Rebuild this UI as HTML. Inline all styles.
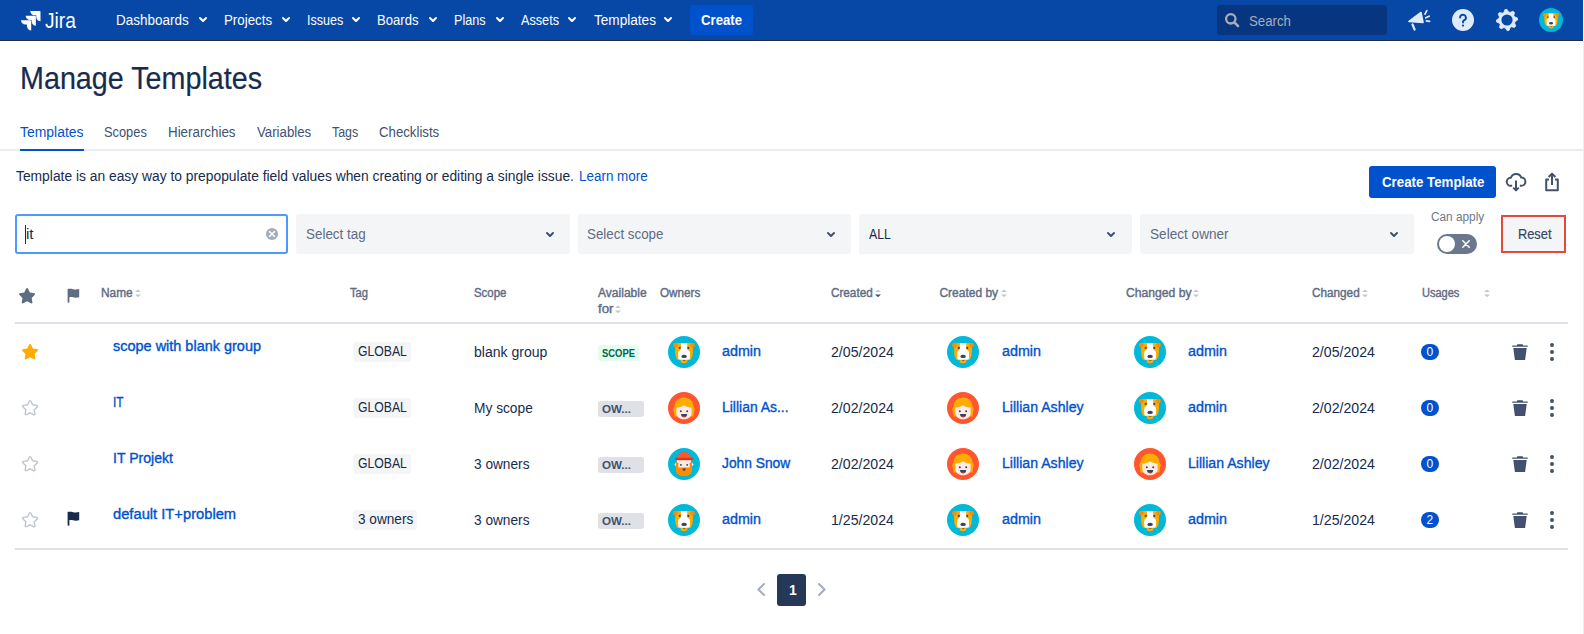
<!DOCTYPE html>
<html><head><meta charset="utf-8"><title>Manage Templates</title>
<style>
html,body{margin:0;padding:0;}
body{width:1584px;height:634px;overflow:hidden;position:relative;background:#fff;font-family:"Liberation Sans",sans-serif;}
.t{position:absolute;white-space:nowrap;}
.b{position:absolute;}
svg.b{overflow:visible;}
</style></head><body>
<div class="b" style="left:0px;top:0px;width:1583px;height:40px;background:#0747A6;"></div>
<div class="b" style="left:0px;top:40px;width:1583px;height:1px;background:#1A2B4C;"></div>
<svg class="b" style="left:20.8px;top:10.6px;" width="19.5" height="19.5" viewBox="1.33 2 27.41 27.41"><defs><linearGradient id="lg1" x1="1" y1="0" x2="0" y2="1"><stop offset="0.45" stop-color="#fff"/><stop offset="1" stop-color="#fff" stop-opacity="0.55"/></linearGradient></defs><path fill="#fff" d="M27.6 2H14.4a5.95 5.95 0 0 0 5.95 5.95h2.44v2.36a5.95 5.95 0 0 0 5.95 5.95V3.14A1.14 1.14 0 0 0 27.6 2z"/><path fill="url(#lg1)" d="M21.07 8.58H7.87a5.95 5.95 0 0 0 5.95 5.95h2.44v2.36a5.95 5.95 0 0 0 5.95 5.95V9.72a1.14 1.14 0 0 0-1.14-1.14z"/><path fill="url(#lg1)" d="M14.53 15.15H1.33a5.95 5.95 0 0 0 5.95 5.95h2.44v2.36a5.95 5.95 0 0 0 5.95 5.95V16.29a1.14 1.14 0 0 0-1.14-1.14z"/></svg>
<div class="t" style="left:44.80px;top:10.38px;font-size:22px;line-height:22px;color:#FFFFFF;transform:scaleX(0.8725);transform-origin:0 0;font-weight:400;">Jira</div>
<div class="t" style="left:116.40px;top:13.15px;font-size:14px;line-height:14px;color:#FFFFFF;transform:scaleX(0.9621);transform-origin:0 0;">Dashboards</div>
<svg class="b" style="left:191px;top:7px;" width="24" height="24" viewBox="0 0 24 24"><path fill="#FFFFFF" d="M8.292 10.293a1.009 1.009 0 0 0 0 1.419l2.939 2.965c.218.215.5.322.779.322s.556-.107.769-.322l2.93-2.955a1.01 1.01 0 0 0 0-1.419.987.987 0 0 0-1.406 0l-2.298 2.317-2.307-2.327a.99.99 0 0 0-1.406 0z"/></svg>
<div class="t" style="left:224.20px;top:13.15px;font-size:14px;line-height:14px;color:#FFFFFF;transform:scaleX(0.9497);transform-origin:0 0;">Projects</div>
<svg class="b" style="left:274px;top:7px;" width="24" height="24" viewBox="0 0 24 24"><path fill="#FFFFFF" d="M8.292 10.293a1.009 1.009 0 0 0 0 1.419l2.939 2.965c.218.215.5.322.779.322s.556-.107.769-.322l2.93-2.955a1.01 1.01 0 0 0 0-1.419.987.987 0 0 0-1.406 0l-2.298 2.317-2.307-2.327a.99.99 0 0 0-1.406 0z"/></svg>
<div class="t" style="left:307.00px;top:13.15px;font-size:14px;line-height:14px;color:#FFFFFF;transform:scaleX(0.8947);transform-origin:0 0;">Issues</div>
<svg class="b" style="left:344.4px;top:7px;" width="24" height="24" viewBox="0 0 24 24"><path fill="#FFFFFF" d="M8.292 10.293a1.009 1.009 0 0 0 0 1.419l2.939 2.965c.218.215.5.322.779.322s.556-.107.769-.322l2.93-2.955a1.01 1.01 0 0 0 0-1.419.987.987 0 0 0-1.406 0l-2.298 2.317-2.307-2.327a.99.99 0 0 0-1.406 0z"/></svg>
<div class="t" style="left:377.20px;top:13.15px;font-size:14px;line-height:14px;color:#FFFFFF;transform:scaleX(0.9351);transform-origin:0 0;">Boards</div>
<svg class="b" style="left:421px;top:7px;" width="24" height="24" viewBox="0 0 24 24"><path fill="#FFFFFF" d="M8.292 10.293a1.009 1.009 0 0 0 0 1.419l2.939 2.965c.218.215.5.322.779.322s.556-.107.769-.322l2.93-2.955a1.01 1.01 0 0 0 0-1.419.987.987 0 0 0-1.406 0l-2.298 2.317-2.307-2.327a.99.99 0 0 0-1.406 0z"/></svg>
<div class="t" style="left:454.20px;top:13.15px;font-size:14px;line-height:14px;color:#FFFFFF;transform:scaleX(0.9029);transform-origin:0 0;">Plans</div>
<svg class="b" style="left:487.5px;top:7px;" width="24" height="24" viewBox="0 0 24 24"><path fill="#FFFFFF" d="M8.292 10.293a1.009 1.009 0 0 0 0 1.419l2.939 2.965c.218.215.5.322.779.322s.556-.107.769-.322l2.93-2.955a1.01 1.01 0 0 0 0-1.419.987.987 0 0 0-1.406 0l-2.298 2.317-2.307-2.327a.99.99 0 0 0-1.406 0z"/></svg>
<div class="t" style="left:521.00px;top:13.15px;font-size:14px;line-height:14px;color:#FFFFFF;transform:scaleX(0.9048);transform-origin:0 0;">Assets</div>
<svg class="b" style="left:560px;top:7px;" width="24" height="24" viewBox="0 0 24 24"><path fill="#FFFFFF" d="M8.292 10.293a1.009 1.009 0 0 0 0 1.419l2.939 2.965c.218.215.5.322.779.322s.556-.107.769-.322l2.93-2.955a1.01 1.01 0 0 0 0-1.419.987.987 0 0 0-1.406 0l-2.298 2.317-2.307-2.327a.99.99 0 0 0-1.406 0z"/></svg>
<div class="t" style="left:593.60px;top:13.15px;font-size:14px;line-height:14px;color:#FFFFFF;transform:scaleX(0.9712);transform-origin:0 0;">Templates</div>
<svg class="b" style="left:656px;top:7px;" width="24" height="24" viewBox="0 0 24 24"><path fill="#FFFFFF" d="M8.292 10.293a1.009 1.009 0 0 0 0 1.419l2.939 2.965c.218.215.5.322.779.322s.556-.107.769-.322l2.93-2.955a1.01 1.01 0 0 0 0-1.419.987.987 0 0 0-1.406 0l-2.298 2.317-2.307-2.327a.99.99 0 0 0-1.406 0z"/></svg>
<div class="b" style="left:690px;top:5px;width:63px;height:30px;background:#0052CC;border-radius:3px;"></div>
<div class="t" style="left:701.00px;top:13.15px;font-size:14px;line-height:14px;color:#FFFFFF;font-weight:700;transform:scaleX(0.9402);transform-origin:0 0;">Create</div>
<div class="b" style="left:1217px;top:5px;width:170px;height:30px;background:#08357F;border-radius:3px;"></div>
<svg class="b" style="left:1220px;top:8px;" width="24" height="24" viewBox="0 0 24 24"><circle cx="10.8" cy="10.8" r="4.7" fill="none" stroke="#A5ADBA" stroke-width="2.3"/><path d="M14.3 14.3L18 18" stroke="#A5ADBA" stroke-width="2.5" stroke-linecap="round"/></svg>
<div class="t" style="left:1249.00px;top:13.95px;font-size:14px;line-height:14px;color:#A5ADBA;transform:scaleX(0.9464);transform-origin:0 0;">Search</div>
<svg class="b" style="left:1406px;top:8px;" width="26" height="24" viewBox="0 0 26 24"><path fill="#DEEBFF" d="M3 13.5 L15 4.5 L17 14.5 Z" stroke="#DEEBFF" stroke-width="1.6" stroke-linejoin="round"/><path d="M6.5 16.5 L8.6 21.5" stroke="#DEEBFF" stroke-width="2.2" stroke-linecap="round"/><path d="M19 6.2 L20.8 2.6 M19.8 9.8 L23.2 8.2 M20.4 12.8 L23.6 13.4" stroke="#DEEBFF" stroke-width="1.7" stroke-linecap="round"/></svg>
<svg class="b" style="left:1452px;top:9px;" width="22" height="22" viewBox="0 0 22 22"><circle cx="11" cy="11" r="11" fill="#DEEBFF"/><path d="M8.1 8.6a2.9 2.9 0 1 1 4.2 2.6c-.8.4-1.3.9-1.3 1.8v.6" fill="none" stroke="#0747A6" stroke-width="1.9" stroke-linecap="round"/><circle cx="11" cy="16.6" r="1.1" fill="#0747A6"/></svg>
<svg class="b" style="left:1496px;top:9px;" width="22" height="22" viewBox="0 0 22 22"><polygon fill="#DEEBFF" stroke="#DEEBFF" stroke-width="0.8" stroke-linejoin="round" points="21.40,8.93 21.60,11.00 19.04,12.60 18.58,14.14 19.81,16.89 18.50,18.50 15.56,17.82 14.14,18.58 13.07,21.40 11.00,21.60 9.40,19.04 7.86,18.58 5.11,19.81 3.50,18.50 4.18,15.56 3.42,14.14 0.60,13.07 0.40,11.00 2.96,9.40 3.42,7.86 2.19,5.11 3.50,3.50 6.44,4.18 7.86,3.42 8.93,0.60 11.00,0.40 12.60,2.96 14.14,3.42 16.89,2.19 18.50,3.50 17.82,6.44 18.58,7.86"/><circle cx="11" cy="11" r="5.6" fill="#0747A6"/></svg>
<svg class="b" style="left:1539px;top:8px" width="24" height="24" viewBox="0 0 32 32"><circle cx="16" cy="16" r="16" fill="#00B8D9"/><path fill="#FFAB00" d="M7.1 7.1H24.9V16Q24.9 20.5 22.9 23.7H9.1Q7.1 20.5 7.1 16Z"/><circle cx="7.5" cy="9.1" r="2.4" fill="#FF8B00"/><circle cx="24.5" cy="9.1" r="2.4" fill="#FF8B00"/><path fill="#FFAB00" d="M12.6 23H19.4V25Q19.4 27.2 16 27.2Q12.6 27.2 12.6 25Z"/><path fill="#FFFFFF" d="M13 7.3H19.2V13.2L22 15.8V22.2Q22 23.8 19.4 23.8H12.6Q10.2 23.8 10.2 22.2V15.8L13 13.2Z"/><circle cx="11.7" cy="11.9" r="1.05" fill="#344563"/><circle cx="20.3" cy="11.9" r="1.05" fill="#344563"/><ellipse cx="16.1" cy="20.4" rx="2.8" ry="1.6" fill="#344563"/><path fill="#344563" d="M14.6 24H17.8Q16.2 25.3 14.6 24Z"/></svg>
<div class="t" style="left:20.40px;top:63.18px;font-size:30.5px;line-height:30.5px;color:#172B4D;transform:scaleX(0.9412);transform-origin:0 0;-webkit-text-stroke:0.2px #172B4D;">Manage Templates</div>
<div class="b" style="left:0px;top:149px;width:1583px;height:2px;background:#EBECF0;"></div>
<div class="b" style="left:20px;top:149px;width:64px;height:2px;background:#0052CC;"></div>
<div class="t" style="left:20.30px;top:125.15px;font-size:14px;line-height:14px;color:#0052CC;transform:scaleX(0.9962);transform-origin:0 0;">Templates</div>
<div class="t" style="left:104.20px;top:125.15px;font-size:14px;line-height:14px;color:#42526E;transform:scaleX(0.9167);transform-origin:0 0;">Scopes</div>
<div class="t" style="left:168.30px;top:125.15px;font-size:14px;line-height:14px;color:#42526E;transform:scaleX(0.9538);transform-origin:0 0;">Hierarchies</div>
<div class="t" style="left:256.70px;top:125.15px;font-size:14px;line-height:14px;color:#42526E;transform:scaleX(0.9454);transform-origin:0 0;">Variables</div>
<div class="t" style="left:332.00px;top:125.15px;font-size:14px;line-height:14px;color:#42526E;transform:scaleX(0.8869);transform-origin:0 0;">Tags</div>
<div class="t" style="left:378.60px;top:125.15px;font-size:14px;line-height:14px;color:#42526E;transform:scaleX(0.9440);transform-origin:0 0;">Checklists</div>
<div class="t" style="left:16.00px;top:168.95px;font-size:14px;line-height:14px;color:#172B4D;transform:scaleX(0.9875);transform-origin:0 0;">Template is an easy way to prepopulate field values when creating or editing a single issue.</div>
<div class="t" style="left:579.30px;top:168.95px;font-size:14px;line-height:14px;color:#0052CC;transform:scaleX(0.9594);transform-origin:0 0;">Learn more</div>
<div class="b" style="left:1369px;top:166px;width:127px;height:32px;background:#0052CC;border-radius:3px;"></div>
<div class="t" style="left:1381.50px;top:174.85px;font-size:14px;line-height:14px;color:#FFFFFF;font-weight:700;transform:scaleX(0.9493);transform-origin:0 0;">Create Template</div>
<svg class="b" style="left:1504px;top:170px;" width="24" height="24" viewBox="0 0 24 24"><path d="M8.2 15.8H6.6A4 4 0 0 1 6.9 7.8A5.5 5.5 0 0 1 17.3 7.6A4.1 4.1 0 0 1 17.3 15.8H15.8" fill="none" stroke="#42526E" stroke-width="2" stroke-linejoin="round"/><path d="M12 10.5V20.2" stroke="#42526E" stroke-width="2"/><path d="M9.2 17.6L12 20.4 14.8 17.6" fill="none" stroke="#42526E" stroke-width="2" stroke-linejoin="round"/></svg>
<svg class="b" style="left:1540px;top:170px;" width="24" height="24" viewBox="0 0 24 24"><path d="M9 9.5H6.2V20.2H17.8V9.5H15" fill="none" stroke="#42526E" stroke-width="2" stroke-linejoin="round"/><path d="M12 4V15" stroke="#42526E" stroke-width="2"/><path d="M8.6 7L12 3.6 15.4 7" fill="none" stroke="#42526E" stroke-width="2" stroke-linejoin="round"/></svg>
<div class="b" style="left:15px;top:214px;width:273px;height:40px;box-sizing:border-box;border:2px solid #4C9AFF;border-radius:3px;background:#fff"></div>
<div class="b" style="left:25px;top:225px;width:1px;height:19px;background:#172B4D;"></div>
<div class="t" style="left:26.00px;top:226.95px;font-size:14px;line-height:14px;color:#172B4D;transform:scaleX(1.0714);transform-origin:0 0;">it</div>
<svg class="b" style="left:266px;top:228px;" width="12" height="12" viewBox="0 0 12 12"><circle cx="6" cy="6" r="6" fill="#A5ADBA"/><path d="M3.7 3.7L8.3 8.3M8.3 3.7L3.7 8.3" stroke="#fff" stroke-width="1.6" stroke-linecap="round"/></svg>
<div class="b" style="left:296px;top:214px;width:274px;height:40px;background:#F4F5F7;border-radius:3px;"></div>
<div class="t" style="left:305.50px;top:226.95px;font-size:14px;line-height:14px;color:#5E6C84;transform:scaleX(0.9577);transform-origin:0 0;">Select tag</div>
<svg class="b" style="left:538px;top:222px;" width="24" height="24" viewBox="0 0 24 24"><path fill="#42526E" d="M8.292 10.293a1.009 1.009 0 0 0 0 1.419l2.939 2.965c.218.215.5.322.779.322s.556-.107.769-.322l2.93-2.955a1.01 1.01 0 0 0 0-1.419.987.987 0 0 0-1.406 0l-2.298 2.317-2.307-2.327a.99.99 0 0 0-1.406 0z"/></svg>
<div class="b" style="left:578px;top:214px;width:273px;height:40px;background:#F4F5F7;border-radius:3px;"></div>
<div class="t" style="left:586.90px;top:226.95px;font-size:14px;line-height:14px;color:#5E6C84;transform:scaleX(0.9532);transform-origin:0 0;">Select scope</div>
<svg class="b" style="left:818.8px;top:222px;" width="24" height="24" viewBox="0 0 24 24"><path fill="#42526E" d="M8.292 10.293a1.009 1.009 0 0 0 0 1.419l2.939 2.965c.218.215.5.322.779.322s.556-.107.769-.322l2.93-2.955a1.01 1.01 0 0 0 0-1.419.987.987 0 0 0-1.406 0l-2.298 2.317-2.307-2.327a.99.99 0 0 0-1.406 0z"/></svg>
<div class="b" style="left:859px;top:214px;width:273px;height:40px;background:#F4F5F7;border-radius:3px;"></div>
<div class="t" style="left:869.00px;top:226.95px;font-size:14px;line-height:14px;color:#172B4D;transform:scaleX(0.8788);transform-origin:0 0;">ALL</div>
<svg class="b" style="left:1099px;top:222px;" width="24" height="24" viewBox="0 0 24 24"><path fill="#42526E" d="M8.292 10.293a1.009 1.009 0 0 0 0 1.419l2.939 2.965c.218.215.5.322.779.322s.556-.107.769-.322l2.93-2.955a1.01 1.01 0 0 0 0-1.419.987.987 0 0 0-1.406 0l-2.298 2.317-2.307-2.327a.99.99 0 0 0-1.406 0z"/></svg>
<div class="b" style="left:1140px;top:214px;width:274px;height:40px;background:#F4F5F7;border-radius:3px;"></div>
<div class="t" style="left:1149.50px;top:226.95px;font-size:14px;line-height:14px;color:#5E6C84;transform:scaleX(0.9713);transform-origin:0 0;">Select owner</div>
<svg class="b" style="left:1382px;top:222px;" width="24" height="24" viewBox="0 0 24 24"><path fill="#42526E" d="M8.292 10.293a1.009 1.009 0 0 0 0 1.419l2.939 2.965c.218.215.5.322.779.322s.556-.107.769-.322l2.93-2.955a1.01 1.01 0 0 0 0-1.419.987.987 0 0 0-1.406 0l-2.298 2.317-2.307-2.327a.99.99 0 0 0-1.406 0z"/></svg>
<div class="t" style="left:1430.50px;top:211.34px;font-size:12px;line-height:12px;color:#6B778C;transform:scaleX(0.9841);transform-origin:0 0;">Can apply</div>
<div class="b" style="left:1437px;top:234px;width:40px;height:20px;background:#6B778C;border-radius:10px;"></div>
<div class="b" style="left:1439px;top:236px;width:16px;height:16px;border-radius:8px;background:#fff"></div>
<svg class="b" style="left:1461px;top:239px;" width="10" height="10" viewBox="0 0 10 10"><path d="M1.8 1.8L8.2 8.2M8.2 1.8L1.8 8.2" stroke="#fff" stroke-width="1.5" stroke-linecap="round"/></svg>
<div class="b" style="left:1501px;top:215px;width:65px;height:38px;box-sizing:border-box;border:2.5px solid #E5493A;background:#F4F5F7"></div>
<div class="t" style="left:1517.60px;top:226.65px;font-size:14px;line-height:14px;color:#344563;transform:scaleX(0.9141);transform-origin:0 0;-webkit-text-stroke:0.2px #344563;">Reset</div>
<svg class="b" style="left:15px;top:284px;" width="24" height="24" viewBox="0 0 24 24"><path fill="#5E6C84" d="M12.072 17.284l-3.905 2.053a1 1 0 0 1-1.451-1.054l.745-4.349-3.159-3.08a1 1 0 0 1 .554-1.705l4.366-.635 1.953-3.956a1 1 0 0 1 1.794 0l1.952 3.956 4.366.635a1 1 0 0 1 .555 1.705l-3.16 3.08.746 4.349a1 1 0 0 1-1.45 1.054l-3.906-2.053z"/></svg>
<svg class="b" style="left:67px;top:288px;" width="13" height="15" viewBox="0 0 13 15"><path fill="#5E6C84" d="M0.6 0.8H2.4V14.6H0.6Z"/><path fill="#5E6C84" d="M1 1.2C4 -0.2 6.6 1.6 8.8 1.4C10 1.3 11 1 12.2 0.9V9.2C11 9.4 10 9.6 8.8 9.7C6.6 9.9 4 8.2 1 9.6Z"/></svg>
<div class="t" style="left:101.40px;top:286.54px;font-size:12px;line-height:12px;color:#5E6C84;transform:scaleX(0.9863);transform-origin:0 0;-webkit-text-stroke:0.4px #5E6C84;">Name</div>
<svg class="b" style="left:135px;top:288.5px;" width="6" height="9" viewBox="0 0 6 9"><path fill="#C1C7D0" d="M0 3.0L3 0.4 6 3.0Z"/><path fill="#C1C7D0" d="M0 5.6L3 8.3 6 5.6Z"/></svg>
<div class="t" style="left:349.60px;top:286.54px;font-size:12px;line-height:12px;color:#5E6C84;transform:scaleX(0.9317);transform-origin:0 0;-webkit-text-stroke:0.4px #5E6C84;">Tag</div>
<div class="t" style="left:473.60px;top:286.54px;font-size:12px;line-height:12px;color:#5E6C84;transform:scaleX(0.9524);transform-origin:0 0;-webkit-text-stroke:0.4px #5E6C84;">Scope</div>
<div class="t" style="left:597.90px;top:286.54px;font-size:12px;line-height:12px;color:#5E6C84;transform:scaleX(1.0045);transform-origin:0 0;-webkit-text-stroke:0.4px #5E6C84;">Available</div>
<div class="t" style="left:660.30px;top:286.54px;font-size:12px;line-height:12px;color:#5E6C84;transform:scaleX(0.9748);transform-origin:0 0;-webkit-text-stroke:0.4px #5E6C84;">Owners</div>
<div class="t" style="left:830.60px;top:286.54px;font-size:12px;line-height:12px;color:#5E6C84;transform:scaleX(0.9761);transform-origin:0 0;-webkit-text-stroke:0.4px #5E6C84;">Created</div>
<svg class="b" style="left:875px;top:288.5px;" width="6" height="9" viewBox="0 0 6 9"><path fill="#C1C7D0" d="M0 3.0L3 0.4 6 3.0Z"/><path fill="#42526E" d="M0 5.6L3 8.3 6 5.6Z"/></svg>
<div class="t" style="left:939.40px;top:286.54px;font-size:12px;line-height:12px;color:#5E6C84;-webkit-text-stroke:0.4px #5E6C84;">Created by</div>
<svg class="b" style="left:1000.6px;top:288.5px;" width="6" height="9" viewBox="0 0 6 9"><path fill="#C1C7D0" d="M0 3.0L3 0.4 6 3.0Z"/><path fill="#C1C7D0" d="M0 5.6L3 8.3 6 5.6Z"/></svg>
<div class="t" style="left:1125.60px;top:286.54px;font-size:12px;line-height:12px;color:#5E6C84;transform:scaleX(1.0133);transform-origin:0 0;-webkit-text-stroke:0.4px #5E6C84;">Changed by</div>
<svg class="b" style="left:1193px;top:288.5px;" width="6" height="9" viewBox="0 0 6 9"><path fill="#C1C7D0" d="M0 3.0L3 0.4 6 3.0Z"/><path fill="#C1C7D0" d="M0 5.6L3 8.3 6 5.6Z"/></svg>
<div class="t" style="left:1312.30px;top:286.54px;font-size:12px;line-height:12px;color:#5E6C84;transform:scaleX(0.9791);transform-origin:0 0;-webkit-text-stroke:0.4px #5E6C84;">Changed</div>
<svg class="b" style="left:1362.3px;top:288.5px;" width="6" height="9" viewBox="0 0 6 9"><path fill="#C1C7D0" d="M0 3.0L3 0.4 6 3.0Z"/><path fill="#C1C7D0" d="M0 5.6L3 8.3 6 5.6Z"/></svg>
<div class="t" style="left:1421.50px;top:286.54px;font-size:12px;line-height:12px;color:#5E6C84;transform:scaleX(0.9169);transform-origin:0 0;-webkit-text-stroke:0.4px #5E6C84;">Usages</div>
<svg class="b" style="left:1484px;top:288.5px;" width="6" height="9" viewBox="0 0 6 9"><path fill="#C1C7D0" d="M0 3.0L3 0.4 6 3.0Z"/><path fill="#C1C7D0" d="M0 5.6L3 8.3 6 5.6Z"/></svg>
<div class="t" style="left:598.00px;top:303.44px;font-size:12px;line-height:12px;color:#5E6C84;transform:scaleX(1.1087);transform-origin:0 0;-webkit-text-stroke:0.4px #5E6C84;">for</div>
<svg class="b" style="left:615.4px;top:305.4px;" width="6" height="9" viewBox="0 0 6 9"><path fill="#C1C7D0" d="M0 3.0L3 0.4 6 3.0Z"/><path fill="#C1C7D0" d="M0 5.6L3 8.3 6 5.6Z"/></svg>
<div class="b" style="left:15px;top:322px;width:1553px;height:2px;background:#DFE1E6;"></div>
<svg class="b" style="left:18px;top:340px;" width="24" height="24" viewBox="0 0 24 24"><path fill="#FFAB00" d="M12.072 17.284l-3.905 2.053a1 1 0 0 1-1.451-1.054l.745-4.349-3.159-3.08a1 1 0 0 1 .554-1.705l4.366-.635 1.953-3.956a1 1 0 0 1 1.794 0l1.952 3.956 4.366.635a1 1 0 0 1 .555 1.705l-3.16 3.08.746 4.349a1 1 0 0 1-1.45 1.054l-3.906-2.053z"/></svg>
<div class="t" style="left:113.40px;top:339.35px;font-size:14px;line-height:14px;color:#0052CC;transform:scaleX(1.0334);transform-origin:0 0;-webkit-text-stroke:0.35px #0052CC;">scope with blank group</div>
<div class="b" style="left:353px;top:342px;width:58px;height:20px;background:#F4F5F7;border-radius:3px;"></div>
<div class="t" style="left:357.80px;top:344.45px;font-size:14px;line-height:14px;color:#172B4D;transform:scaleX(0.8732);transform-origin:0 0;">GLOBAL</div>
<div class="t" style="left:474.00px;top:345.05px;font-size:14px;line-height:14px;color:#172B4D;transform:scaleX(1.0034);transform-origin:0 0;">blank group</div>
<div class="b" style="left:598px;top:344.7px;width:40.6px;height:16px;background:#E3FCEF;border-radius:3px;"></div>
<div class="t" style="left:602.00px;top:347.99px;font-size:11px;line-height:11px;color:#006644;font-weight:700;transform:scaleX(0.8571);transform-origin:0 0;">SCOPE</div>
<svg class="b" style="left:668px;top:336px" width="32" height="32" viewBox="0 0 32 32"><circle cx="16" cy="16" r="16" fill="#00B8D9"/><path fill="#FFAB00" d="M7.1 7.1H24.9V16Q24.9 20.5 22.9 23.7H9.1Q7.1 20.5 7.1 16Z"/><circle cx="7.5" cy="9.1" r="2.4" fill="#FF8B00"/><circle cx="24.5" cy="9.1" r="2.4" fill="#FF8B00"/><path fill="#FFAB00" d="M12.6 23H19.4V25Q19.4 27.2 16 27.2Q12.6 27.2 12.6 25Z"/><path fill="#FFFFFF" d="M13 7.3H19.2V13.2L22 15.8V22.2Q22 23.8 19.4 23.8H12.6Q10.2 23.8 10.2 22.2V15.8L13 13.2Z"/><circle cx="11.7" cy="11.9" r="1.05" fill="#344563"/><circle cx="20.3" cy="11.9" r="1.05" fill="#344563"/><ellipse cx="16.1" cy="20.4" rx="2.8" ry="1.6" fill="#344563"/><path fill="#344563" d="M14.6 24H17.8Q16.2 25.3 14.6 24Z"/></svg>
<div class="t" style="left:722.30px;top:344.15px;font-size:14px;line-height:14px;color:#0052CC;transform:scaleX(1.0223);transform-origin:0 0;-webkit-text-stroke:0.35px #0052CC;">admin</div>
<svg class="b" style="left:947px;top:336px" width="32" height="32" viewBox="0 0 32 32"><circle cx="16" cy="16" r="16" fill="#00B8D9"/><path fill="#FFAB00" d="M7.1 7.1H24.9V16Q24.9 20.5 22.9 23.7H9.1Q7.1 20.5 7.1 16Z"/><circle cx="7.5" cy="9.1" r="2.4" fill="#FF8B00"/><circle cx="24.5" cy="9.1" r="2.4" fill="#FF8B00"/><path fill="#FFAB00" d="M12.6 23H19.4V25Q19.4 27.2 16 27.2Q12.6 27.2 12.6 25Z"/><path fill="#FFFFFF" d="M13 7.3H19.2V13.2L22 15.8V22.2Q22 23.8 19.4 23.8H12.6Q10.2 23.8 10.2 22.2V15.8L13 13.2Z"/><circle cx="11.7" cy="11.9" r="1.05" fill="#344563"/><circle cx="20.3" cy="11.9" r="1.05" fill="#344563"/><ellipse cx="16.1" cy="20.4" rx="2.8" ry="1.6" fill="#344563"/><path fill="#344563" d="M14.6 24H17.8Q16.2 25.3 14.6 24Z"/></svg>
<div class="t" style="left:1001.70px;top:344.15px;font-size:14px;line-height:14px;color:#0052CC;transform:scaleX(1.0223);transform-origin:0 0;-webkit-text-stroke:0.35px #0052CC;">admin</div>
<svg class="b" style="left:1134px;top:336px" width="32" height="32" viewBox="0 0 32 32"><circle cx="16" cy="16" r="16" fill="#00B8D9"/><path fill="#FFAB00" d="M7.1 7.1H24.9V16Q24.9 20.5 22.9 23.7H9.1Q7.1 20.5 7.1 16Z"/><circle cx="7.5" cy="9.1" r="2.4" fill="#FF8B00"/><circle cx="24.5" cy="9.1" r="2.4" fill="#FF8B00"/><path fill="#FFAB00" d="M12.6 23H19.4V25Q19.4 27.2 16 27.2Q12.6 27.2 12.6 25Z"/><path fill="#FFFFFF" d="M13 7.3H19.2V13.2L22 15.8V22.2Q22 23.8 19.4 23.8H12.6Q10.2 23.8 10.2 22.2V15.8L13 13.2Z"/><circle cx="11.7" cy="11.9" r="1.05" fill="#344563"/><circle cx="20.3" cy="11.9" r="1.05" fill="#344563"/><ellipse cx="16.1" cy="20.4" rx="2.8" ry="1.6" fill="#344563"/><path fill="#344563" d="M14.6 24H17.8Q16.2 25.3 14.6 24Z"/></svg>
<div class="t" style="left:1188.00px;top:344.15px;font-size:14px;line-height:14px;color:#0052CC;transform:scaleX(1.0223);transform-origin:0 0;-webkit-text-stroke:0.35px #0052CC;">admin</div>
<div class="t" style="left:831.00px;top:345.05px;font-size:14px;line-height:14px;color:#172B4D;transform:scaleX(1.0096);transform-origin:0 0;">2/05/2024</div>
<div class="t" style="left:1312.30px;top:345.05px;font-size:14px;line-height:14px;color:#172B4D;transform:scaleX(1.0096);transform-origin:0 0;">2/05/2024</div>
<div class="b" style="left:1421px;top:344px;width:18px;height:16px;background:#0052CC;border-radius:8px;"></div>
<div class="t" style="left:1426.50px;top:346.14px;font-size:12px;line-height:12px;color:#FFFFFF;">0</div>
<svg class="b" style="left:1512px;top:344px;" width="16" height="16" viewBox="0 0 16 16"><path fill="#42526E" d="M5.6 0.3H10.4Q11 0.3 11 1V1.4H15.2Q16 1.4 16 2.1Q16 2.8 15.2 2.8H0.8Q0 2.8 0 2.1Q0 1.4 0.8 1.4H5V1Q5 0.3 5.6 0.3Z"/><path fill="#42526E" d="M1.3 3.9H14.7L13.2 15.4Q13.1 16 12.5 16H3.5Q2.9 16 2.8 15.4Z"/></svg>
<div class="b" style="left:1549.8px;top:342.75px;width:4.5px;height:4.5px;border-radius:50%;background:#42526E"></div>
<div class="b" style="left:1549.8px;top:349.75px;width:4.5px;height:4.5px;border-radius:50%;background:#42526E"></div>
<div class="b" style="left:1549.8px;top:356.75px;width:4.5px;height:4.5px;border-radius:50%;background:#42526E"></div>
<svg class="b" style="left:18px;top:396.3px;" width="24" height="24" viewBox="0 0 24 24"><path fill="none" stroke="#C1C7D0" stroke-width="1.6" transform="translate(12.07 11.73) scale(0.91) translate(-12.07 -11.73)" d="M12.072 17.284l-3.905 2.053a1 1 0 0 1-1.451-1.054l.745-4.349-3.159-3.08a1 1 0 0 1 .554-1.705l4.366-.635 1.953-3.956a1 1 0 0 1 1.794 0l1.952 3.956 4.366.635a1 1 0 0 1 .555 1.705l-3.16 3.08.746 4.349a1 1 0 0 1-1.45 1.054l-3.906-2.053z"/></svg>
<div class="t" style="left:113.40px;top:395.35px;font-size:14px;line-height:14px;color:#0052CC;transform:scaleX(0.8507);transform-origin:0 0;-webkit-text-stroke:0.35px #0052CC;">IT</div>
<div class="b" style="left:353px;top:398px;width:58px;height:20px;background:#F4F5F7;border-radius:3px;"></div>
<div class="t" style="left:357.80px;top:400.45px;font-size:14px;line-height:14px;color:#172B4D;transform:scaleX(0.8732);transform-origin:0 0;">GLOBAL</div>
<div class="t" style="left:474.00px;top:401.05px;font-size:14px;line-height:14px;color:#172B4D;transform:scaleX(0.9813);transform-origin:0 0;">My scope</div>
<div class="b" style="left:598px;top:401px;width:46px;height:16px;background:#DFE1E6;border-radius:3px;"></div>
<div class="t" style="left:601.50px;top:403.99px;font-size:11px;line-height:11px;color:#42526E;font-weight:700;transform:scaleX(1.0545);transform-origin:0 0;">OW...</div>
<svg class="b" style="left:668px;top:392px" width="32" height="32" viewBox="0 0 32 32"><circle cx="16" cy="16" r="16" fill="#FF5630"/><path fill="#FFAB00" d="M16 5.6C21.5 5.6 25.4 9.5 25.4 14.5C26.8 15.6 27.2 17.6 26.2 19.2L25.4 24.5H6.6L5.8 19.2C4.8 17.6 5.2 15.6 6.6 14.5C6.6 9.5 10.5 5.6 16 5.6Z"/><path fill="#FFEBE6" d="M8.4 15.8C10.8 15.6 13.8 14.8 16 13.2C18.2 14.8 21.2 15.6 23.6 15.8V21.2C23.6 24.6 20.4 27.3 16 27.3C11.6 27.3 8.4 24.6 8.4 21.2Z"/><circle cx="12.8" cy="19.3" r="1" fill="#344563"/><circle cx="19.2" cy="19.3" r="1" fill="#344563"/><path fill="#344563" d="M13 22H19.2Q19 25.3 16.1 25.3Q13.2 25.3 13 22Z"/><path fill="#DE350B" d="M14.4 24.4Q16.1 23.4 17.8 24.4Q17 25.3 16.1 25.3Q15.2 25.3 14.4 24.4Z"/></svg>
<div class="t" style="left:722.30px;top:400.15px;font-size:14px;line-height:14px;color:#0052CC;transform:scaleX(0.9952);transform-origin:0 0;-webkit-text-stroke:0.35px #0052CC;">Lillian As...</div>
<svg class="b" style="left:947px;top:392px" width="32" height="32" viewBox="0 0 32 32"><circle cx="16" cy="16" r="16" fill="#FF5630"/><path fill="#FFAB00" d="M16 5.6C21.5 5.6 25.4 9.5 25.4 14.5C26.8 15.6 27.2 17.6 26.2 19.2L25.4 24.5H6.6L5.8 19.2C4.8 17.6 5.2 15.6 6.6 14.5C6.6 9.5 10.5 5.6 16 5.6Z"/><path fill="#FFEBE6" d="M8.4 15.8C10.8 15.6 13.8 14.8 16 13.2C18.2 14.8 21.2 15.6 23.6 15.8V21.2C23.6 24.6 20.4 27.3 16 27.3C11.6 27.3 8.4 24.6 8.4 21.2Z"/><circle cx="12.8" cy="19.3" r="1" fill="#344563"/><circle cx="19.2" cy="19.3" r="1" fill="#344563"/><path fill="#344563" d="M13 22H19.2Q19 25.3 16.1 25.3Q13.2 25.3 13 22Z"/><path fill="#DE350B" d="M14.4 24.4Q16.1 23.4 17.8 24.4Q17 25.3 16.1 25.3Q15.2 25.3 14.4 24.4Z"/></svg>
<div class="t" style="left:1001.70px;top:400.15px;font-size:14px;line-height:14px;color:#0052CC;transform:scaleX(1.0072);transform-origin:0 0;-webkit-text-stroke:0.35px #0052CC;">Lillian Ashley</div>
<svg class="b" style="left:1134px;top:392px" width="32" height="32" viewBox="0 0 32 32"><circle cx="16" cy="16" r="16" fill="#00B8D9"/><path fill="#FFAB00" d="M7.1 7.1H24.9V16Q24.9 20.5 22.9 23.7H9.1Q7.1 20.5 7.1 16Z"/><circle cx="7.5" cy="9.1" r="2.4" fill="#FF8B00"/><circle cx="24.5" cy="9.1" r="2.4" fill="#FF8B00"/><path fill="#FFAB00" d="M12.6 23H19.4V25Q19.4 27.2 16 27.2Q12.6 27.2 12.6 25Z"/><path fill="#FFFFFF" d="M13 7.3H19.2V13.2L22 15.8V22.2Q22 23.8 19.4 23.8H12.6Q10.2 23.8 10.2 22.2V15.8L13 13.2Z"/><circle cx="11.7" cy="11.9" r="1.05" fill="#344563"/><circle cx="20.3" cy="11.9" r="1.05" fill="#344563"/><ellipse cx="16.1" cy="20.4" rx="2.8" ry="1.6" fill="#344563"/><path fill="#344563" d="M14.6 24H17.8Q16.2 25.3 14.6 24Z"/></svg>
<div class="t" style="left:1188.00px;top:400.15px;font-size:14px;line-height:14px;color:#0052CC;transform:scaleX(1.0223);transform-origin:0 0;-webkit-text-stroke:0.35px #0052CC;">admin</div>
<div class="t" style="left:831.00px;top:401.05px;font-size:14px;line-height:14px;color:#172B4D;transform:scaleX(1.0096);transform-origin:0 0;">2/02/2024</div>
<div class="t" style="left:1312.30px;top:401.05px;font-size:14px;line-height:14px;color:#172B4D;transform:scaleX(1.0096);transform-origin:0 0;">2/02/2024</div>
<div class="b" style="left:1421px;top:400px;width:18px;height:16px;background:#0052CC;border-radius:8px;"></div>
<div class="t" style="left:1426.50px;top:402.14px;font-size:12px;line-height:12px;color:#FFFFFF;">0</div>
<svg class="b" style="left:1512px;top:400px;" width="16" height="16" viewBox="0 0 16 16"><path fill="#42526E" d="M5.6 0.3H10.4Q11 0.3 11 1V1.4H15.2Q16 1.4 16 2.1Q16 2.8 15.2 2.8H0.8Q0 2.8 0 2.1Q0 1.4 0.8 1.4H5V1Q5 0.3 5.6 0.3Z"/><path fill="#42526E" d="M1.3 3.9H14.7L13.2 15.4Q13.1 16 12.5 16H3.5Q2.9 16 2.8 15.4Z"/></svg>
<div class="b" style="left:1549.8px;top:398.75px;width:4.5px;height:4.5px;border-radius:50%;background:#42526E"></div>
<div class="b" style="left:1549.8px;top:405.75px;width:4.5px;height:4.5px;border-radius:50%;background:#42526E"></div>
<div class="b" style="left:1549.8px;top:412.75px;width:4.5px;height:4.5px;border-radius:50%;background:#42526E"></div>
<svg class="b" style="left:18px;top:452.3px;" width="24" height="24" viewBox="0 0 24 24"><path fill="none" stroke="#C1C7D0" stroke-width="1.6" transform="translate(12.07 11.73) scale(0.91) translate(-12.07 -11.73)" d="M12.072 17.284l-3.905 2.053a1 1 0 0 1-1.451-1.054l.745-4.349-3.159-3.08a1 1 0 0 1 .554-1.705l4.366-.635 1.953-3.956a1 1 0 0 1 1.794 0l1.952 3.956 4.366.635a1 1 0 0 1 .555 1.705l-3.16 3.08.746 4.349a1 1 0 0 1-1.45 1.054l-3.906-2.053z"/></svg>
<div class="t" style="left:113.40px;top:451.35px;font-size:14px;line-height:14px;color:#0052CC;transform:scaleX(1.0060);transform-origin:0 0;-webkit-text-stroke:0.35px #0052CC;">IT Projekt</div>
<div class="b" style="left:353px;top:454px;width:58px;height:20px;background:#F4F5F7;border-radius:3px;"></div>
<div class="t" style="left:357.80px;top:456.45px;font-size:14px;line-height:14px;color:#172B4D;transform:scaleX(0.8732);transform-origin:0 0;">GLOBAL</div>
<div class="t" style="left:474.00px;top:457.05px;font-size:14px;line-height:14px;color:#172B4D;transform:scaleX(0.9764);transform-origin:0 0;">3 owners</div>
<div class="b" style="left:598px;top:457px;width:46px;height:16px;background:#DFE1E6;border-radius:3px;"></div>
<div class="t" style="left:601.50px;top:459.99px;font-size:11px;line-height:11px;color:#42526E;font-weight:700;transform:scaleX(1.0545);transform-origin:0 0;">OW...</div>
<svg class="b" style="left:668px;top:448px" width="32" height="32" viewBox="0 0 32 32"><circle cx="16" cy="16" r="16" fill="#00B8D9"/><circle cx="8.1" cy="16.4" r="1.5" fill="#FFEBE6"/><circle cx="23.9" cy="16.4" r="1.5" fill="#FFEBE6"/><path fill="#FFEBE6" d="M8.8 11.5H23.2V21H8.8Z"/><path fill="#FF8B00" d="M8 14.4H10.4V19.4H21.6V14.4H24V22.5C24 26.2 20.6 28.2 16 28.2C11.4 28.2 8 26.2 8 22.5Z"/><path fill="#344563" d="M14.4 20.6H17.8Q17.6 23 16.1 23Q14.6 23 14.4 20.6Z"/><circle cx="12.9" cy="16.9" r="0.95" fill="#344563"/><circle cx="19.2" cy="16.9" r="0.95" fill="#344563"/><path fill="#FF5630" d="M9.2 10.6C9.2 6.5 12.2 4 16 4C19.8 4 22.8 6.5 22.8 10.6Z"/><path fill="#DE350B" d="M7.2 9.8H24.8V12.2H7.2Z"/></svg>
<div class="t" style="left:722.30px;top:456.15px;font-size:14px;line-height:14px;color:#0052CC;transform:scaleX(0.9841);transform-origin:0 0;-webkit-text-stroke:0.35px #0052CC;">John Snow</div>
<svg class="b" style="left:947px;top:448px" width="32" height="32" viewBox="0 0 32 32"><circle cx="16" cy="16" r="16" fill="#FF5630"/><path fill="#FFAB00" d="M16 5.6C21.5 5.6 25.4 9.5 25.4 14.5C26.8 15.6 27.2 17.6 26.2 19.2L25.4 24.5H6.6L5.8 19.2C4.8 17.6 5.2 15.6 6.6 14.5C6.6 9.5 10.5 5.6 16 5.6Z"/><path fill="#FFEBE6" d="M8.4 15.8C10.8 15.6 13.8 14.8 16 13.2C18.2 14.8 21.2 15.6 23.6 15.8V21.2C23.6 24.6 20.4 27.3 16 27.3C11.6 27.3 8.4 24.6 8.4 21.2Z"/><circle cx="12.8" cy="19.3" r="1" fill="#344563"/><circle cx="19.2" cy="19.3" r="1" fill="#344563"/><path fill="#344563" d="M13 22H19.2Q19 25.3 16.1 25.3Q13.2 25.3 13 22Z"/><path fill="#DE350B" d="M14.4 24.4Q16.1 23.4 17.8 24.4Q17 25.3 16.1 25.3Q15.2 25.3 14.4 24.4Z"/></svg>
<div class="t" style="left:1001.70px;top:456.15px;font-size:14px;line-height:14px;color:#0052CC;transform:scaleX(1.0072);transform-origin:0 0;-webkit-text-stroke:0.35px #0052CC;">Lillian Ashley</div>
<svg class="b" style="left:1134px;top:448px" width="32" height="32" viewBox="0 0 32 32"><circle cx="16" cy="16" r="16" fill="#FF5630"/><path fill="#FFAB00" d="M16 5.6C21.5 5.6 25.4 9.5 25.4 14.5C26.8 15.6 27.2 17.6 26.2 19.2L25.4 24.5H6.6L5.8 19.2C4.8 17.6 5.2 15.6 6.6 14.5C6.6 9.5 10.5 5.6 16 5.6Z"/><path fill="#FFEBE6" d="M8.4 15.8C10.8 15.6 13.8 14.8 16 13.2C18.2 14.8 21.2 15.6 23.6 15.8V21.2C23.6 24.6 20.4 27.3 16 27.3C11.6 27.3 8.4 24.6 8.4 21.2Z"/><circle cx="12.8" cy="19.3" r="1" fill="#344563"/><circle cx="19.2" cy="19.3" r="1" fill="#344563"/><path fill="#344563" d="M13 22H19.2Q19 25.3 16.1 25.3Q13.2 25.3 13 22Z"/><path fill="#DE350B" d="M14.4 24.4Q16.1 23.4 17.8 24.4Q17 25.3 16.1 25.3Q15.2 25.3 14.4 24.4Z"/></svg>
<div class="t" style="left:1188.00px;top:456.15px;font-size:14px;line-height:14px;color:#0052CC;transform:scaleX(1.0072);transform-origin:0 0;-webkit-text-stroke:0.35px #0052CC;">Lillian Ashley</div>
<div class="t" style="left:831.00px;top:457.05px;font-size:14px;line-height:14px;color:#172B4D;transform:scaleX(1.0096);transform-origin:0 0;">2/02/2024</div>
<div class="t" style="left:1312.30px;top:457.05px;font-size:14px;line-height:14px;color:#172B4D;transform:scaleX(1.0096);transform-origin:0 0;">2/02/2024</div>
<div class="b" style="left:1421px;top:456px;width:18px;height:16px;background:#0052CC;border-radius:8px;"></div>
<div class="t" style="left:1426.50px;top:458.14px;font-size:12px;line-height:12px;color:#FFFFFF;">0</div>
<svg class="b" style="left:1512px;top:456px;" width="16" height="16" viewBox="0 0 16 16"><path fill="#42526E" d="M5.6 0.3H10.4Q11 0.3 11 1V1.4H15.2Q16 1.4 16 2.1Q16 2.8 15.2 2.8H0.8Q0 2.8 0 2.1Q0 1.4 0.8 1.4H5V1Q5 0.3 5.6 0.3Z"/><path fill="#42526E" d="M1.3 3.9H14.7L13.2 15.4Q13.1 16 12.5 16H3.5Q2.9 16 2.8 15.4Z"/></svg>
<div class="b" style="left:1549.8px;top:454.75px;width:4.5px;height:4.5px;border-radius:50%;background:#42526E"></div>
<div class="b" style="left:1549.8px;top:461.75px;width:4.5px;height:4.5px;border-radius:50%;background:#42526E"></div>
<div class="b" style="left:1549.8px;top:468.75px;width:4.5px;height:4.5px;border-radius:50%;background:#42526E"></div>
<svg class="b" style="left:18px;top:508.3px;" width="24" height="24" viewBox="0 0 24 24"><path fill="none" stroke="#C1C7D0" stroke-width="1.6" transform="translate(12.07 11.73) scale(0.91) translate(-12.07 -11.73)" d="M12.072 17.284l-3.905 2.053a1 1 0 0 1-1.451-1.054l.745-4.349-3.159-3.08a1 1 0 0 1 .554-1.705l4.366-.635 1.953-3.956a1 1 0 0 1 1.794 0l1.952 3.956 4.366.635a1 1 0 0 1 .555 1.705l-3.16 3.08.746 4.349a1 1 0 0 1-1.45 1.054l-3.906-2.053z"/></svg>
<svg class="b" style="left:67px;top:511px;" width="13" height="15" viewBox="0 0 13 15"><path fill="#172B4D" d="M0.6 0.8H2.4V14.6H0.6Z"/><path fill="#172B4D" d="M1 1.2C4 -0.2 6.6 1.6 8.8 1.4C10 1.3 11 1 12.2 0.9V9.2C11 9.4 10 9.6 8.8 9.7C6.6 9.9 4 8.2 1 9.6Z"/></svg>
<div class="t" style="left:113.40px;top:507.35px;font-size:14px;line-height:14px;color:#0052CC;transform:scaleX(1.0511);transform-origin:0 0;-webkit-text-stroke:0.35px #0052CC;">default IT+problem</div>
<div class="b" style="left:353px;top:510px;width:64px;height:20px;background:#F4F5F7;border-radius:3px;"></div>
<div class="t" style="left:357.80px;top:512.45px;font-size:14px;line-height:14px;color:#172B4D;transform:scaleX(0.9729);transform-origin:0 0;">3 owners</div>
<div class="t" style="left:474.00px;top:513.05px;font-size:14px;line-height:14px;color:#172B4D;transform:scaleX(0.9764);transform-origin:0 0;">3 owners</div>
<div class="b" style="left:598px;top:513px;width:46px;height:16px;background:#DFE1E6;border-radius:3px;"></div>
<div class="t" style="left:601.50px;top:515.99px;font-size:11px;line-height:11px;color:#42526E;font-weight:700;transform:scaleX(1.0545);transform-origin:0 0;">OW...</div>
<svg class="b" style="left:668px;top:504px" width="32" height="32" viewBox="0 0 32 32"><circle cx="16" cy="16" r="16" fill="#00B8D9"/><path fill="#FFAB00" d="M7.1 7.1H24.9V16Q24.9 20.5 22.9 23.7H9.1Q7.1 20.5 7.1 16Z"/><circle cx="7.5" cy="9.1" r="2.4" fill="#FF8B00"/><circle cx="24.5" cy="9.1" r="2.4" fill="#FF8B00"/><path fill="#FFAB00" d="M12.6 23H19.4V25Q19.4 27.2 16 27.2Q12.6 27.2 12.6 25Z"/><path fill="#FFFFFF" d="M13 7.3H19.2V13.2L22 15.8V22.2Q22 23.8 19.4 23.8H12.6Q10.2 23.8 10.2 22.2V15.8L13 13.2Z"/><circle cx="11.7" cy="11.9" r="1.05" fill="#344563"/><circle cx="20.3" cy="11.9" r="1.05" fill="#344563"/><ellipse cx="16.1" cy="20.4" rx="2.8" ry="1.6" fill="#344563"/><path fill="#344563" d="M14.6 24H17.8Q16.2 25.3 14.6 24Z"/></svg>
<div class="t" style="left:722.30px;top:512.15px;font-size:14px;line-height:14px;color:#0052CC;transform:scaleX(1.0223);transform-origin:0 0;-webkit-text-stroke:0.35px #0052CC;">admin</div>
<svg class="b" style="left:947px;top:504px" width="32" height="32" viewBox="0 0 32 32"><circle cx="16" cy="16" r="16" fill="#00B8D9"/><path fill="#FFAB00" d="M7.1 7.1H24.9V16Q24.9 20.5 22.9 23.7H9.1Q7.1 20.5 7.1 16Z"/><circle cx="7.5" cy="9.1" r="2.4" fill="#FF8B00"/><circle cx="24.5" cy="9.1" r="2.4" fill="#FF8B00"/><path fill="#FFAB00" d="M12.6 23H19.4V25Q19.4 27.2 16 27.2Q12.6 27.2 12.6 25Z"/><path fill="#FFFFFF" d="M13 7.3H19.2V13.2L22 15.8V22.2Q22 23.8 19.4 23.8H12.6Q10.2 23.8 10.2 22.2V15.8L13 13.2Z"/><circle cx="11.7" cy="11.9" r="1.05" fill="#344563"/><circle cx="20.3" cy="11.9" r="1.05" fill="#344563"/><ellipse cx="16.1" cy="20.4" rx="2.8" ry="1.6" fill="#344563"/><path fill="#344563" d="M14.6 24H17.8Q16.2 25.3 14.6 24Z"/></svg>
<div class="t" style="left:1001.70px;top:512.15px;font-size:14px;line-height:14px;color:#0052CC;transform:scaleX(1.0223);transform-origin:0 0;-webkit-text-stroke:0.35px #0052CC;">admin</div>
<svg class="b" style="left:1134px;top:504px" width="32" height="32" viewBox="0 0 32 32"><circle cx="16" cy="16" r="16" fill="#00B8D9"/><path fill="#FFAB00" d="M7.1 7.1H24.9V16Q24.9 20.5 22.9 23.7H9.1Q7.1 20.5 7.1 16Z"/><circle cx="7.5" cy="9.1" r="2.4" fill="#FF8B00"/><circle cx="24.5" cy="9.1" r="2.4" fill="#FF8B00"/><path fill="#FFAB00" d="M12.6 23H19.4V25Q19.4 27.2 16 27.2Q12.6 27.2 12.6 25Z"/><path fill="#FFFFFF" d="M13 7.3H19.2V13.2L22 15.8V22.2Q22 23.8 19.4 23.8H12.6Q10.2 23.8 10.2 22.2V15.8L13 13.2Z"/><circle cx="11.7" cy="11.9" r="1.05" fill="#344563"/><circle cx="20.3" cy="11.9" r="1.05" fill="#344563"/><ellipse cx="16.1" cy="20.4" rx="2.8" ry="1.6" fill="#344563"/><path fill="#344563" d="M14.6 24H17.8Q16.2 25.3 14.6 24Z"/></svg>
<div class="t" style="left:1188.00px;top:512.15px;font-size:14px;line-height:14px;color:#0052CC;transform:scaleX(1.0223);transform-origin:0 0;-webkit-text-stroke:0.35px #0052CC;">admin</div>
<div class="t" style="left:831.00px;top:513.05px;font-size:14px;line-height:14px;color:#172B4D;transform:scaleX(1.0096);transform-origin:0 0;">1/25/2024</div>
<div class="t" style="left:1312.30px;top:513.05px;font-size:14px;line-height:14px;color:#172B4D;transform:scaleX(1.0096);transform-origin:0 0;">1/25/2024</div>
<div class="b" style="left:1421px;top:512px;width:18px;height:16px;background:#0052CC;border-radius:8px;"></div>
<div class="t" style="left:1426.50px;top:514.14px;font-size:12px;line-height:12px;color:#FFFFFF;">2</div>
<svg class="b" style="left:1512px;top:512px;" width="16" height="16" viewBox="0 0 16 16"><path fill="#42526E" d="M5.6 0.3H10.4Q11 0.3 11 1V1.4H15.2Q16 1.4 16 2.1Q16 2.8 15.2 2.8H0.8Q0 2.8 0 2.1Q0 1.4 0.8 1.4H5V1Q5 0.3 5.6 0.3Z"/><path fill="#42526E" d="M1.3 3.9H14.7L13.2 15.4Q13.1 16 12.5 16H3.5Q2.9 16 2.8 15.4Z"/></svg>
<div class="b" style="left:1549.8px;top:510.75px;width:4.5px;height:4.5px;border-radius:50%;background:#42526E"></div>
<div class="b" style="left:1549.8px;top:517.75px;width:4.5px;height:4.5px;border-radius:50%;background:#42526E"></div>
<div class="b" style="left:1549.8px;top:524.75px;width:4.5px;height:4.5px;border-radius:50%;background:#42526E"></div>
<div class="b" style="left:15px;top:548px;width:1553px;height:2px;background:#DFE1E6;"></div>
<div class="b" style="left:777px;top:574px;width:29px;height:32px;background:#253858;border-radius:3px;"></div>
<div class="t" style="left:788.90px;top:583.15px;font-size:14px;line-height:14px;color:#FFFFFF;font-weight:700;">1</div>
<svg class="b" style="left:754px;top:580px;" width="14" height="18" viewBox="0 0 14 18"><path d="M10 4L4.4 9.5 10 15" fill="none" stroke="#A5ADBA" stroke-width="2" stroke-linecap="round" stroke-linejoin="round"/></svg>
<svg class="b" style="left:815px;top:580px;" width="14" height="18" viewBox="0 0 14 18"><path d="M4 4L9.6 9.5 4 15" fill="none" stroke="#A5ADBA" stroke-width="2" stroke-linecap="round" stroke-linejoin="round"/></svg>
<div class="b" style="left:1583px;top:41px;width:1px;height:593px;background:#EEEEEE;"></div>
</body></html>
